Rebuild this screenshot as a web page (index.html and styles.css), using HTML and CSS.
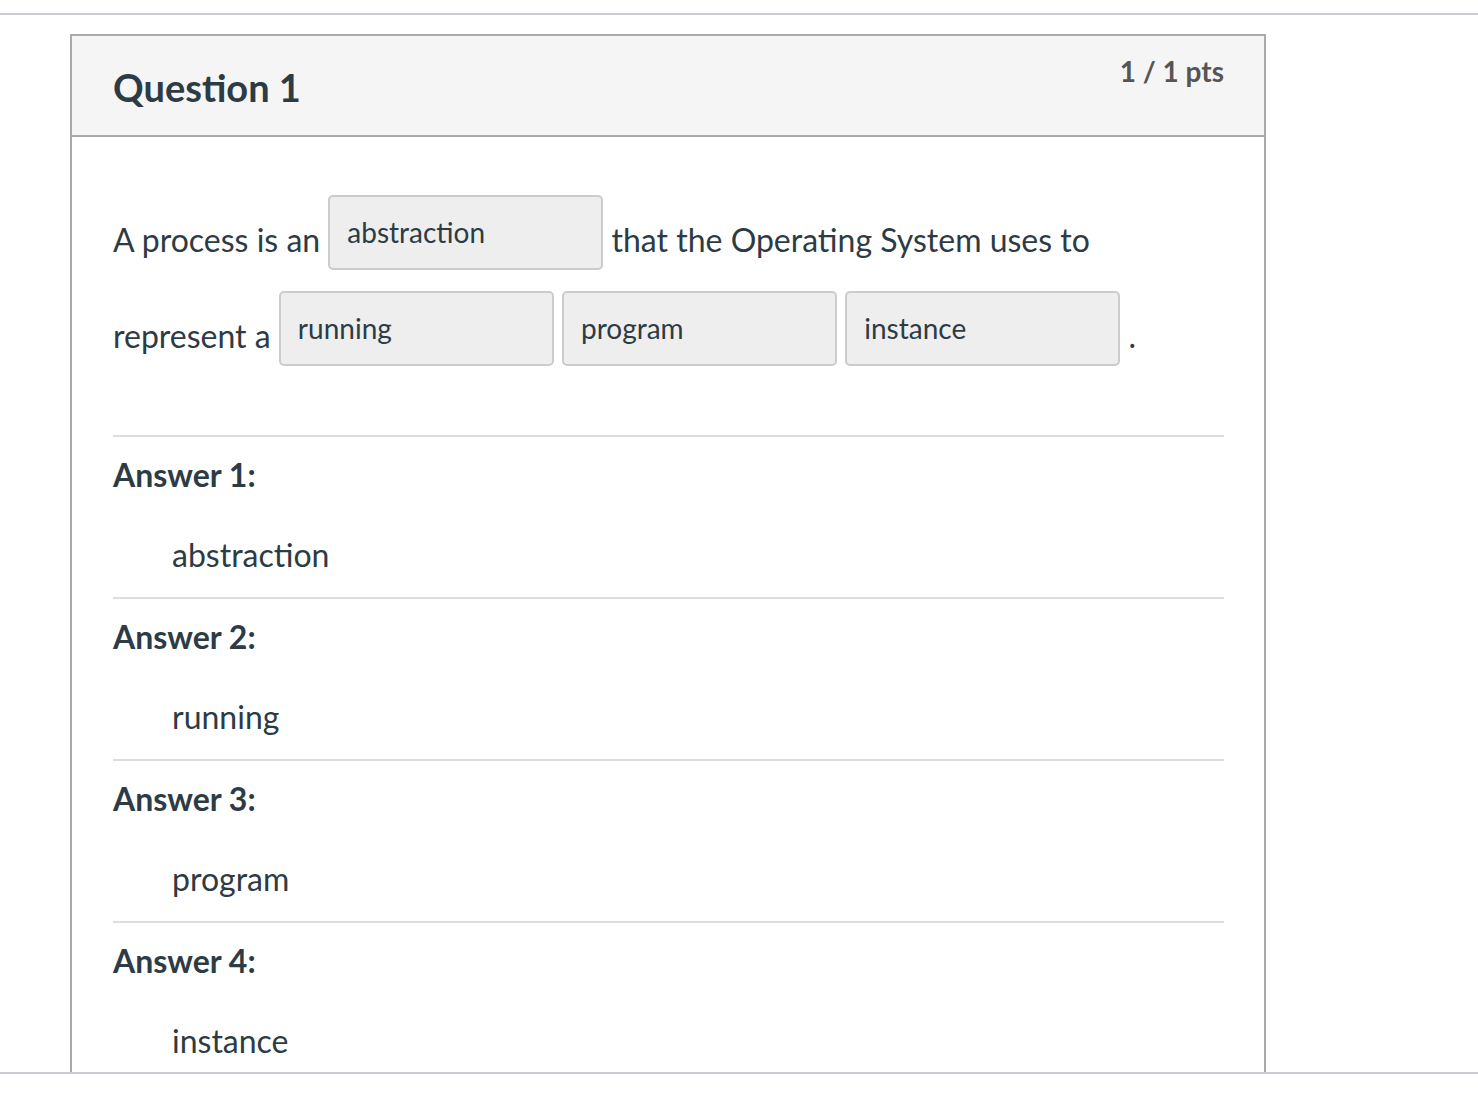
FILE: index.html
```html
<!DOCTYPE html>
<html lang="en">
<head>
<meta charset="utf-8">
<title>Question 1</title>
<link rel="stylesheet" href="styles.css">
</head>
<body>
<div class="viewport">
  <div class="question">
    <div class="q-header">
      <h2 class="q-title">Question 1</h2>
      <div class="q-points">1 / 1 pts</div>
    </div>
    <div class="q-body">
      <div class="q-text">A process is an <span class="blank">abstraction</span> that the Operating System uses to<br>represent a <span class="blank">running</span> <span class="blank">program</span> <span class="blank">instance</span> .</div>
      <div class="answers">
        <div class="answer">
          <div class="answer-label">Answer 1:</div>
          <div class="answer-value">abstraction</div>
        </div>
        <div class="answer">
          <div class="answer-label">Answer 2:</div>
          <div class="answer-value">running</div>
        </div>
        <div class="answer">
          <div class="answer-label">Answer 3:</div>
          <div class="answer-value">program</div>
        </div>
        <div class="answer">
          <div class="answer-label">Answer 4:</div>
          <div class="answer-value">instance</div>
        </div>
      </div>
    </div>
  </div>
</div>
</body>
</html>
```

FILE: styles.css
```css
html, body {
  margin: 0;
  padding: 0;
  background: #ffffff;
}
body {
  font-family: Lato, "Open Sans", sans-serif;
  color: #2d3b45;
}
.viewport {
  margin-top: 13px;
  border-top: 2px solid #c7cdd1;
  border-bottom: 2px solid #c7cdd1;
  overflow: hidden;
  padding-top: 19px;
  box-sizing: border-box;
  height: 1061px;
}
.question {
  margin-left: 70px;
  width: 1196px;
  box-sizing: border-box;
  border: 2px solid #aaaaaa;
}
.q-header {
  display: flex;
  justify-content: space-between;
  align-items: flex-start;
  background: #f5f5f5;
  border-bottom: 2px solid #aaaaaa;
  height: 101px;
  box-sizing: border-box;
  padding: 0 40px 0 41px;
}
.q-title {
  margin: 29px 0 0 0;
  font-size: 38px;
  line-height: 44px;
  font-weight: 700;
  color: #2d3b45;
}
.q-points {
  margin-top: 18px;
  font-size: 28px;
  line-height: 34px;
  font-weight: 700;
  color: #555555;
}
.q-body {
  padding: 55px 40px 0 41px;
}
.q-text {
  font-size: 32px;
  line-height: 96px;
}
.blank {
  display: inline-block;
  vertical-align: 9px;
  width: 275px;
  height: 75px;
  box-sizing: border-box;
  margin: 0;
  padding-left: 17px;
  background: #eeeeee;
  border: 2px solid #cccccc;
  border-radius: 5px;
  font-size: 28px;
  line-height: 71px;
  color: #2d3b45;
}
.answers {
  margin-top: 51px;
}
.answer {
  border-top: 2px solid #dddddd;
  padding: 18px 0 22px 0;
}
.answer-label {
  font-size: 32px;
  line-height: 40px;
  font-weight: 700;
}
.answer-value {
  margin-top: 40px;
  padding-left: 59px;
  font-size: 32px;
  line-height: 40px;
}
```
